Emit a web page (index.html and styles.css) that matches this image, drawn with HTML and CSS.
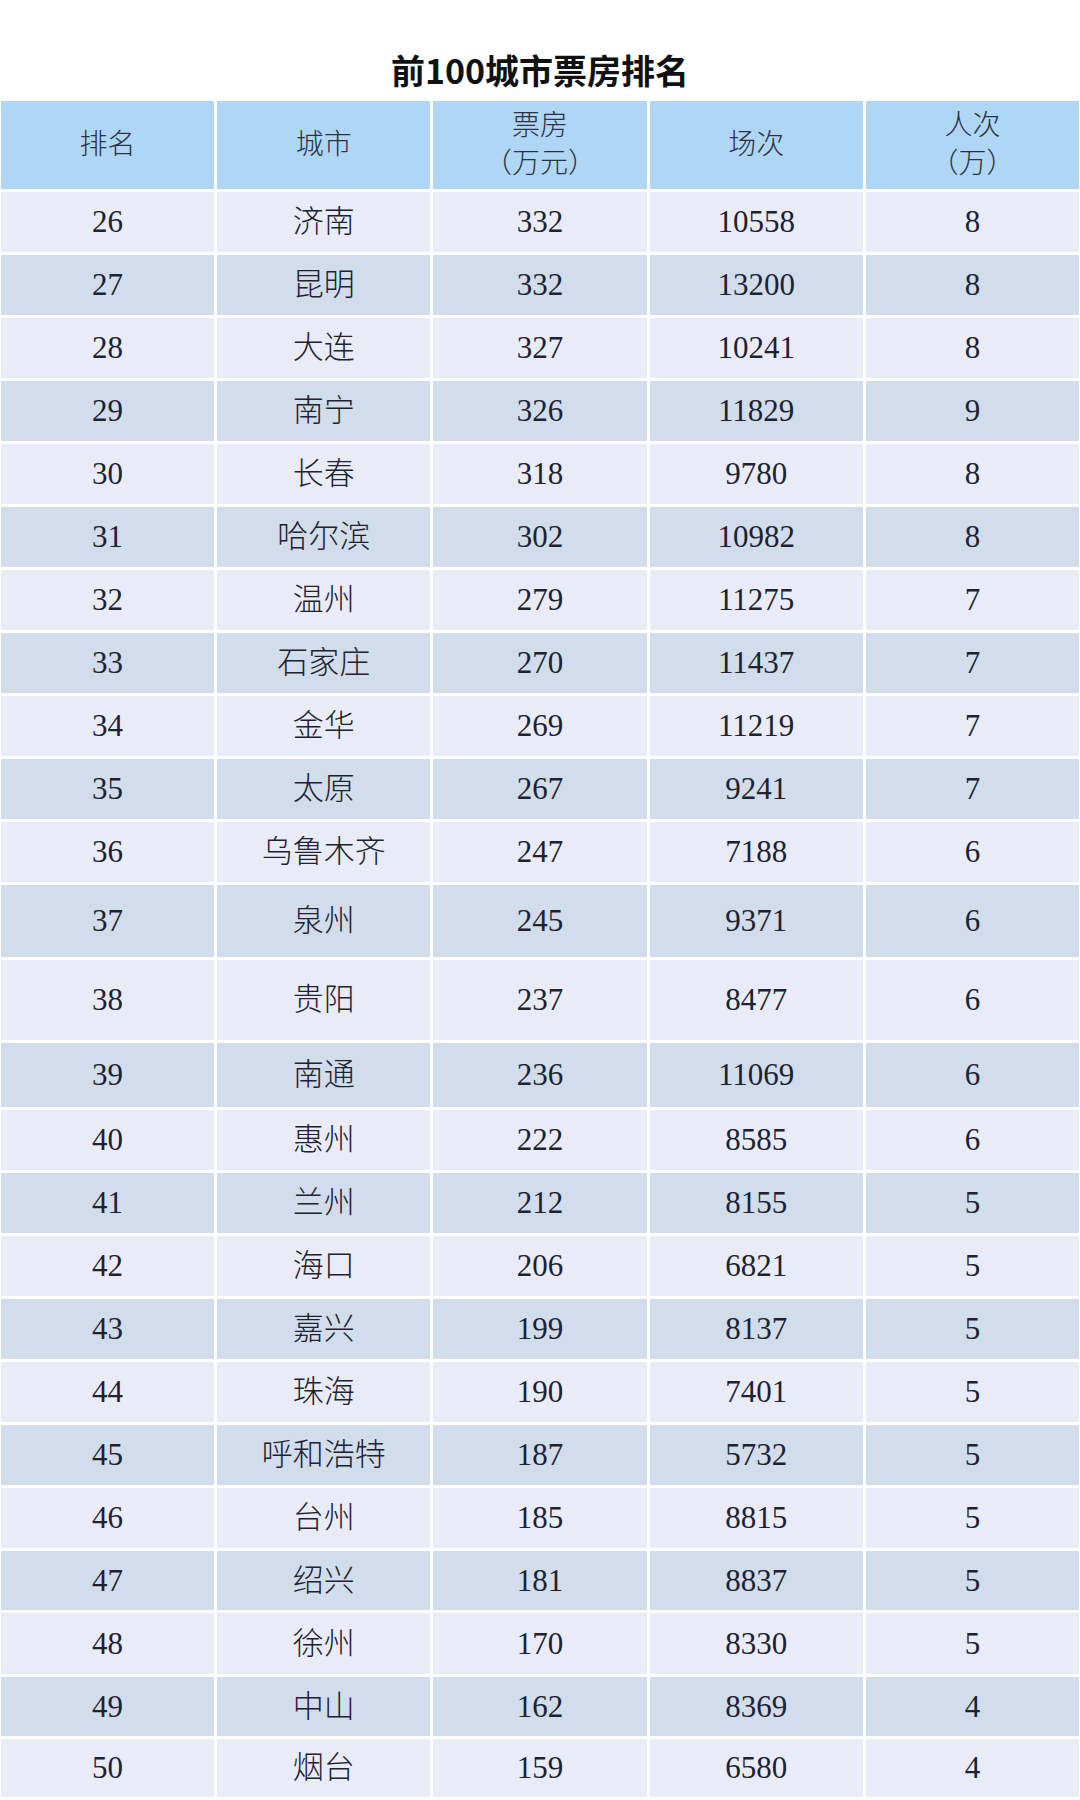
FILE: index.html
```html
<!DOCTYPE html>
<html lang="zh-CN">
<head>
<meta charset="utf-8">
<title>前100城市票房排名</title>
<link rel="stylesheet" href="styles.css">
</head>
<body>
<div class="page">
  <h1 class="title">前100城市票房排名</h1>
  <div class="table">
    <div class="row head">
      <div class="cell">排名</div>
      <div class="cell">城市</div>
      <div class="cell"><span>票房</span><span>（万元）</span></div>
      <div class="cell">场次</div>
      <div class="cell"><span>人次</span><span>（万）</span></div>
    </div>
    <div class="row light"><div class="cell">26</div><div class="cell">济南</div><div class="cell">332</div><div class="cell">10558</div><div class="cell">8</div></div>
    <div class="row dark"><div class="cell">27</div><div class="cell">昆明</div><div class="cell">332</div><div class="cell">13200</div><div class="cell">8</div></div>
    <div class="row light"><div class="cell">28</div><div class="cell">大连</div><div class="cell">327</div><div class="cell">10241</div><div class="cell">8</div></div>
    <div class="row dark"><div class="cell">29</div><div class="cell">南宁</div><div class="cell">326</div><div class="cell">11829</div><div class="cell">9</div></div>
    <div class="row light"><div class="cell">30</div><div class="cell">长春</div><div class="cell">318</div><div class="cell">9780</div><div class="cell">8</div></div>
    <div class="row dark"><div class="cell">31</div><div class="cell">哈尔滨</div><div class="cell">302</div><div class="cell">10982</div><div class="cell">8</div></div>
    <div class="row light"><div class="cell">32</div><div class="cell">温州</div><div class="cell">279</div><div class="cell">11275</div><div class="cell">7</div></div>
    <div class="row dark"><div class="cell">33</div><div class="cell">石家庄</div><div class="cell">270</div><div class="cell">11437</div><div class="cell">7</div></div>
    <div class="row light"><div class="cell">34</div><div class="cell">金华</div><div class="cell">269</div><div class="cell">11219</div><div class="cell">7</div></div>
    <div class="row dark"><div class="cell">35</div><div class="cell">太原</div><div class="cell">267</div><div class="cell">9241</div><div class="cell">7</div></div>
    <div class="row light"><div class="cell">36</div><div class="cell">乌鲁木齐</div><div class="cell">247</div><div class="cell">7188</div><div class="cell">6</div></div>
    <div class="row dark h72"><div class="cell">37</div><div class="cell">泉州</div><div class="cell">245</div><div class="cell">9371</div><div class="cell">6</div></div>
    <div class="row light h80"><div class="cell">38</div><div class="cell">贵阳</div><div class="cell">237</div><div class="cell">8477</div><div class="cell">6</div></div>
    <div class="row dark h64"><div class="cell">39</div><div class="cell">南通</div><div class="cell">236</div><div class="cell">11069</div><div class="cell">6</div></div>
    <div class="row light"><div class="cell">40</div><div class="cell">惠州</div><div class="cell">222</div><div class="cell">8585</div><div class="cell">6</div></div>
    <div class="row dark"><div class="cell">41</div><div class="cell">兰州</div><div class="cell">212</div><div class="cell">8155</div><div class="cell">5</div></div>
    <div class="row light"><div class="cell">42</div><div class="cell">海口</div><div class="cell">206</div><div class="cell">6821</div><div class="cell">5</div></div>
    <div class="row dark"><div class="cell">43</div><div class="cell">嘉兴</div><div class="cell">199</div><div class="cell">8137</div><div class="cell">5</div></div>
    <div class="row light"><div class="cell">44</div><div class="cell">珠海</div><div class="cell">190</div><div class="cell">7401</div><div class="cell">5</div></div>
    <div class="row dark"><div class="cell">45</div><div class="cell">呼和浩特</div><div class="cell">187</div><div class="cell">5732</div><div class="cell">5</div></div>
    <div class="row light"><div class="cell">46</div><div class="cell">台州</div><div class="cell">185</div><div class="cell">8815</div><div class="cell">5</div></div>
    <div class="row dark h59"><div class="cell">47</div><div class="cell">绍兴</div><div class="cell">181</div><div class="cell">8837</div><div class="cell">5</div></div>
    <div class="row light h61"><div class="cell">48</div><div class="cell">徐州</div><div class="cell">170</div><div class="cell">8330</div><div class="cell">5</div></div>
    <div class="row dark h59"><div class="cell">49</div><div class="cell">中山</div><div class="cell">162</div><div class="cell">8369</div><div class="cell">4</div></div>
    <div class="row light h58"><div class="cell">50</div><div class="cell">烟台</div><div class="cell">159</div><div class="cell">6580</div><div class="cell">4</div></div>
  </div>
</div>
</body>
</html>
```
FILE: styles.css
```css
html, body {
  margin: 0;
  padding: 0;
  background: #ffffff;
}

.page {
  width: 1080px;
}

.title {
  margin: 0;
  height: 98px;
  box-sizing: border-box;
  padding-top: 50px;
  line-height: 40px;
  text-align: center;
  font-family: "Noto Sans CJK SC", "Noto Sans", sans-serif;
  font-weight: 700;
  font-size: 34px;
  color: #111111;
}

.table {
  display: flex;
  flex-direction: column;
  gap: 3px;
  padding: 3px 1px 0 1px;
}

.row {
  display: grid;
  grid-template-columns: repeat(5, 1fr);
  column-gap: 3px;
  height: 60px;
}

.row.head { height: 88px; }
.row.h72 { height: 72px; }
.row.h80 { height: 80px; }
.row.h64 { height: 64px; }
.row.h59 { height: 59px; }
.row.h61 { height: 61px; }
.row.h58 { height: 58px; }

.cell {
  display: flex;
  flex-direction: column;
  align-items: center;
  justify-content: center;
  font-family: "Liberation Serif", "DejaVu Serif", "Noto Sans CJK SC", serif;
  font-size: 31px;
  font-weight: 300;
  color: #1e2230;
  line-height: 38px;
}

.head .cell {
  background: #b0d6f6;
  font-size: 28px;
  color: #2a3242;
  font-weight: 300;
}

.light .cell {
  background: #e9ecf7;
}

.dark .cell {
  background: #d1ddeb;
}
```
